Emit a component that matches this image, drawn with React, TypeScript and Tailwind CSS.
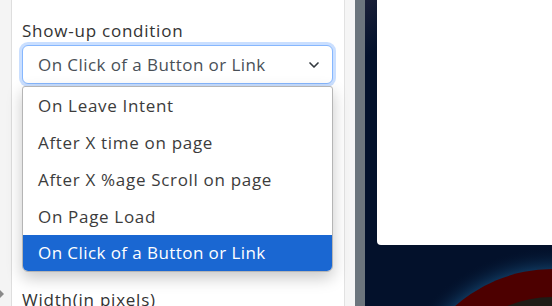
import { ChevronDown } from "lucide-react";

const options = [
  "On Leave Intent",
  "After X time on page",
  "After X %age Scroll on page",
  "On Page Load",
  "On Click of a Button or Link",
];

export default function App() {
  const selected = options.length - 1;

  return (
    <div
      className="flex h-[306px] w-[552px] overflow-hidden bg-white text-[17px]"
      style={{ fontFamily: '"Open Sans", "Noto Sans", sans-serif' }}
    >
      {/* left gutter */}
      <div className="relative w-[12px] shrink-0 border-r border-[#dedede] bg-[#f4f4f4]">
        <div className="absolute left-0 top-[290px] h-0 w-0 border-y-[4px] border-l-[4px] border-y-transparent border-l-[#8a8a8a]" />
      </div>

      {/* settings panel */}
      <div className="w-[333px] shrink-0 border-r border-[#e2e2e2] pl-[10px] pr-[11px] pt-[19px]">
        <label className="mb-[2px] block leading-6 tracking-[0.045em] text-[#333]">Show-up condition</label>

        <div className="relative">
          <div className="flex h-[39px] items-center justify-between rounded-md border border-[#86b7fe] bg-white pl-[15px] pr-[10px] text-[#495057] shadow-[0_0_0_3px_rgba(13,110,253,0.22)]">
            <span className="tracking-[0.025em]">{options[selected]}</span>
            <ChevronDown className="h-4 w-4 text-[#343a40]" strokeWidth={2.5} />
          </div>

          {/* open list */}
          <ul className="absolute left-0 right-0 top-[41px] z-10 overflow-hidden rounded-b-md rounded-t-[3px] border border-[#b5b5b5] bg-white shadow-[0_6px_16px_rgba(0,0,0,0.22)]">
            {options.map((o, i) => (
              <li
                key={o}
                className={
                  i === selected
                    ? "flex h-[36px] items-center bg-[#1a67d2] px-[15px] tracking-[0.025em] text-white"
                    : "flex h-[37px] items-center px-[15px] tracking-[0.04em] text-[#3c3c3c]"
                }
              >
                {o}
              </li>
            ))}
          </ul>
        </div>

        <label className="mt-[204px] block leading-6 tracking-[0.045em] text-[#333]">Width(in pixels)</label>
      </div>

      {/* divider strips */}
      <div className="w-[10px] shrink-0 bg-[#f5f5f5]" />
      <div className="w-[10px] shrink-0 bg-[#6c757d]" />

      {/* preview canvas */}
      <div className="relative flex-1 bg-[#03112b] bg-gradient-to-br from-[#1b2038] via-[#03112b] to-[#03112b] bg-[length:60px_60px] bg-no-repeat">
        <svg className="absolute left-0 top-0" width="187" height="306" viewBox="365 0 187 306">
          <defs>
            <radialGradient id="glow" cx="553" cy="417" r="170" gradientUnits="userSpaceOnUse">
              <stop offset="0.82" stopColor="#1b5a8a" stopOpacity="0.9" />
              <stop offset="1" stopColor="#03112b" stopOpacity="0" />
            </radialGradient>
          </defs>
          <circle cx="553" cy="417" r="170" fill="url(#glow)" />
          <circle cx="553" cy="417" r="148" fill="#4d0000" />
          <circle cx="553" cy="417" r="120" fill="#1f1b16" />
        </svg>
        <div className="relative ml-[12px] h-[245px] rounded-bl-[4px] bg-white" />
      </div>
    </div>
  );
}
